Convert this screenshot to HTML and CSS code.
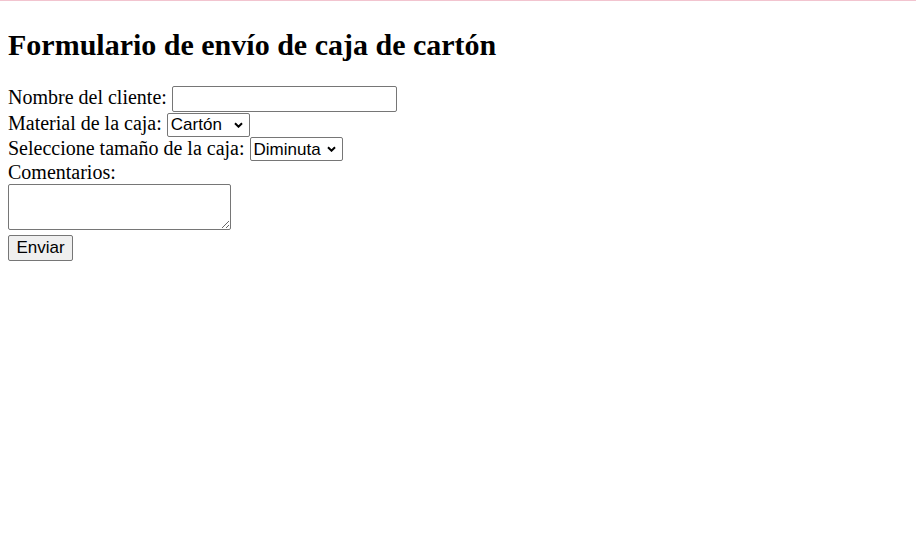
FILE: index.html
```html
<!DOCTYPE html>
<html lang="es">
<head>
<meta charset="utf-8">
<title>Formulario</title>
<link rel="stylesheet" href="styles.css">
</head>
<body>
<h2 class="title">Formulario de envío de caja de cartón</h2>
<form class="box-form">
<label>Nombre del cliente: <input class="f-text" type="text"></label><br>
<label>Material de la caja: <select class="f-sel f-mat"><option>Cartón</option><option>Plástico</option></select></label><br>
<label>Seleccione tamaño de la caja: <select class="f-sel f-size"><option>Diminuta</option><option>Pequeña</option></select></label><br>
<label>Comentarios:<br><textarea class="f-area"></textarea></label><br>
<button class="f-btn" type="submit">Enviar</button>
</form>
</body>
</html>
```
FILE: styles.css
```css
html { border-top: 1px solid #f2c4cf; }
body { margin: 8px; font-family: "Liberation Serif", "Times New Roman", serif; font-size: 20px; color: #000; }
.title { font-size: 30px; font-weight: bold; margin: 19px 0 24px; }
.f-text, .f-sel, .f-area, .f-btn {
  font-family: "Liberation Sans", Arial, sans-serif;
  font-size: 17px;
  color: #000;
  box-sizing: border-box;
  margin: 0;
}
.f-text { width: 225px; height: 26px; border: 1px solid #767676; border-radius: 2px; padding: 1px 2px; }
.f-sel {
  -webkit-appearance: none;
  appearance: none;
  height: 24px;
  border: 1px solid #767676;
  border-radius: 2px;
  padding: 0 14px 0 3px;
  background: #fff url("data:image/svg+xml,%3Csvg xmlns='http://www.w3.org/2000/svg' width='9' height='6' viewBox='0 0 9 6'%3E%3Cpath d='M1 1.2 L4.5 4.7 L8 1.2' fill='none' stroke='%23000' stroke-width='2'/%3E%3C/svg%3E") no-repeat right 6px center;
}
.f-mat { width: 83px; }
.f-size { width: 93px; }
.f-area { width: 223px; height: 46px; border: 1px solid #767676; border-radius: 2px; vertical-align: baseline; }
.f-btn { width: 65px; height: 26px; border: 1px solid #767676; border-radius: 2px; background: #efefef; padding: 1px 6px; }
```
